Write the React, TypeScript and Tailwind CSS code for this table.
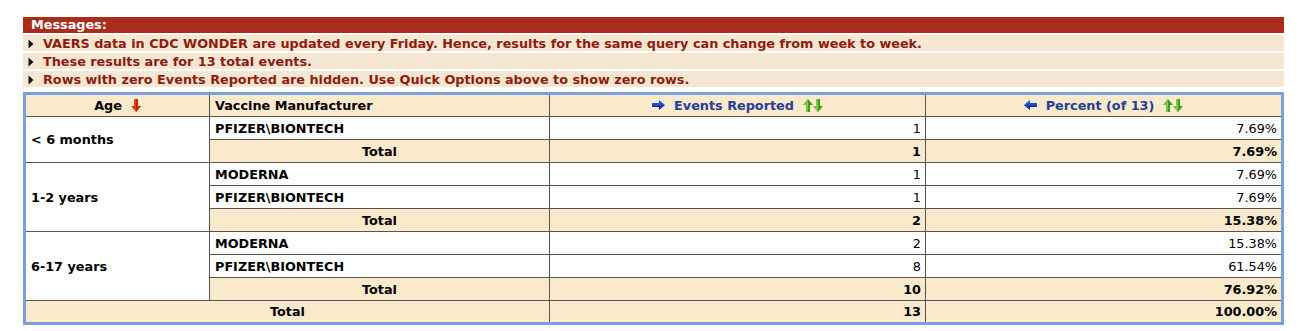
import React from 'react'

const messages = [
  'VAERS data in CDC WONDER are updated every Friday. Hence, results for the same query can change from week to week.',
  'These results are for 13 total events.',
  'Rows with zero Events Reported are hidden. Use Quick Options above to show zero rows.',
]

interface Group {
  age: string
  rows: { maker: string; events: string; pct: string }[]
  total: { events: string; pct: string }
}

const groups: Group[] = [
  {
    age: '< 6 months',
    rows: [{ maker: 'PFIZER\\BIONTECH', events: '1', pct: '7.69%' }],
    total: { events: '1', pct: '7.69%' },
  },
  {
    age: '1-2 years',
    rows: [
      { maker: 'MODERNA', events: '1', pct: '7.69%' },
      { maker: 'PFIZER\\BIONTECH', events: '1', pct: '7.69%' },
    ],
    total: { events: '2', pct: '15.38%' },
  },
  {
    age: '6-17 years',
    rows: [
      { maker: 'MODERNA', events: '2', pct: '15.38%' },
      { maker: 'PFIZER\\BIONTECH', events: '8', pct: '61.54%' },
    ],
    total: { events: '10', pct: '76.92%' },
  },
]

function Bullet() {
  return (
    <svg width="6" height="10" viewBox="0 0 6 10" className="inline-block mr-[9px] align-[-1px]">
      <polygon points="0.5,0.5 5.5,5 0.5,9.5" fill="#111" />
    </svg>
  )
}

function RedDown() {
  return (
    <svg width="10" height="13" viewBox="0 0 10 13" className="inline-block ml-[9px] align-[-2px]">
      <polygon points="3,0 7,0 7,7 10,7 5,13 0,7 3,7" fill="#e0401f" />
      <polygon points="5,0 7,0 7,7 10,7 5,13" fill="#b82a14" />
    </svg>
  )
}

function BlueArrow({ left }: { left?: boolean }) {
  return (
    <svg
      width="13"
      height="10"
      viewBox="0 0 13 10"
      className={`inline-block mr-[9px] align-[0px] ${left ? '-scale-x-100' : ''}`}
    >
      <polygon points="0,3 7,3 7,0 13,5 7,10 7,7 0,7" fill="#2450e0" />
      <polygon points="0,5 13,5 7,10 7,7 0,7" fill="#1a36b0" />
    </svg>
  )
}

function GreenArrows() {
  return (
    <span className="inline-flex ml-[9px] align-[-2px]">
      <svg width="10" height="13" viewBox="0 0 10 13">
        <polygon points="5,0 10,6 7,6 7,13 3,13 3,6 0,6" fill="#3f9c1c" />
        <polygon points="5,0 0,6 3,6 3,13 5,13" fill="#7cc84a" />
      </svg>
      <svg width="10" height="13" viewBox="0 0 10 13">
        <polygon points="3,0 7,0 7,7 10,7 5,13 0,7 3,7" fill="#3f9c1c" />
        <polygon points="3,0 5,0 5,13 0,7 3,7" fill="#7cc84a" />
      </svg>
    </span>
  )
}

const cell = 'border border-[#555] h-[23px] p-0 pt-[1px]'

export default function App() {
  return (
    <div className="pt-[17px] pl-[23px] font-['DejaVu_Sans','Verdana',sans-serif] text-[12.8px] leading-[16px]">
      <div className="w-[1261px]">
        <div className="bg-[#a92c1c] text-white font-bold h-[16px] pl-[8px] leading-[16px]">Messages:</div>
        {messages.map((m) => (
          <div key={m} className="bg-[#f5e7d2] text-[#8e1b0d] font-bold h-[16px] mt-[2px] pl-[5px] leading-[17px]">
            <Bullet />
            {m}
          </div>
        ))}
      </div>

      <table className="mt-[5px] w-[1261px] table-fixed border-collapse border-[3px] border-[#7b9fdc] text-black">
        <colgroup>
          <col className="w-[185px]" />
          <col className="w-[340px]" />
          <col className="w-[376px]" />
          <col />
        </colgroup>
        <thead>
          <tr className="bg-[#fae9ca] font-bold">
            <th className={`${cell} text-center`}>
              Age
              <RedDown />
            </th>
            <th className={`${cell} text-left pl-[5px]`}>Vaccine Manufacturer</th>
            <th className={`${cell} text-center text-[#21409a]`}>
              <BlueArrow />
              Events Reported
              <GreenArrows />
            </th>
            <th className={`${cell} text-center text-[#21409a]`}>
              <BlueArrow left />
              Percent (of 13)
              <GreenArrows />
            </th>
          </tr>
        </thead>
        <tbody>
          {groups.map((g) => (
            <React.Fragment key={g.age}>
              {g.rows.map((r, i) => (
                <tr key={r.maker} className="bg-white">
                  {i === 0 && (
                    <td rowSpan={g.rows.length + 1} className={`${cell} font-bold pl-[5px]`}>
                      {g.age}
                    </td>
                  )}
                  <td className={`${cell} font-bold pl-[5px]`}>{r.maker}</td>
                  <td className={`${cell} text-right pr-[4px]`}>{r.events}</td>
                  <td className={`${cell} text-right pr-[4px]`}>{r.pct}</td>
                </tr>
              ))}
              <tr className="bg-[#fae9ca] font-bold">
                <td className={`${cell} text-center`}>Total</td>
                <td className={`${cell} text-right pr-[4px]`}>{g.total.events}</td>
                <td className={`${cell} text-right pr-[4px]`}>{g.total.pct}</td>
              </tr>
            </React.Fragment>
          ))}
          <tr className="bg-[#fae9ca] font-bold">
            <td colSpan={2} className={`${cell} text-center`}>Total</td>
            <td className={`${cell} text-right pr-[4px]`}>13</td>
            <td className={`${cell} text-right pr-[4px]`}>100.00%</td>
          </tr>
        </tbody>
      </table>
    </div>
  )
}
